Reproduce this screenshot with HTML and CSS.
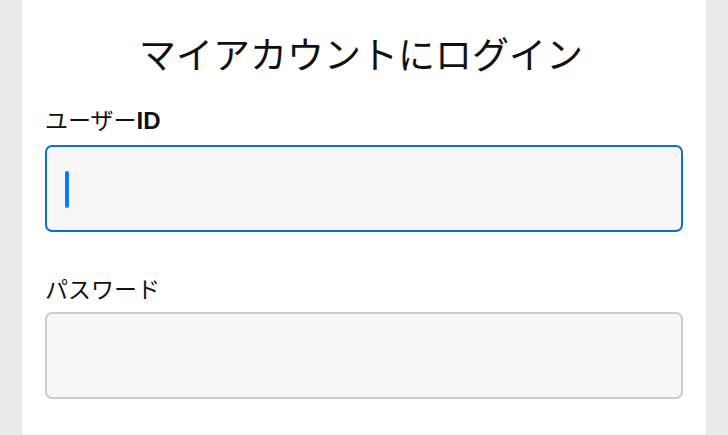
FILE: index.html
```html
<!DOCTYPE html>
<html lang="ja">
<head>
    <meta charset="UTF-8">
    <meta name="viewport" content="width=device-width, initial-scale=1.0">
    <title>ログイン</title>
    <link rel="stylesheet" href="styles.css">
</head>
<body>
    <div class="container">
        <h1>マイアカウントにログイン</h1>

        <div class="form-group">
            <label for="user-id">ユーザー<b>ID</b></label>
            <div class="field">
                <input type="text" id="user-id" class="active">
                <span class="caret"></span>
            </div>
        </div>

        <div class="form-group">
            <label for="user-password">パスワード</label>
            <div class="field">
                <input type="password" id="user-password">
            </div>
        </div>
    </div>
</body>
</html>
```

FILE: styles.css
```css
body {
    font-family: "Noto Sans CJK JP", "Noto Sans", sans-serif;
    background-color: #ebebeb;
    color: #111;
    margin: 0;
    padding: 0;
}
.container {
    margin: 0 22px;
    padding: 27px 23px 16px;
    min-height: 100vh;
    box-sizing: border-box;
    background: #fff;
}
h1 {
    margin: 0 0 22px;
    padding-right: 6px;
    font-size: 37px;
    font-weight: normal;
    line-height: 52px;
    text-align: center;
}
.form-group {
    margin-bottom: 38px;
}
.form-group:last-child {
    margin-bottom: 0;
}
.form-group label {
    display: block;
    font-size: 23px;
    line-height: 32px;
    padding-top: 2px;
    margin-bottom: 8px;
}
.form-group label b {
    font-family: "Liberation Sans", Arial, sans-serif;
    font-size: 24px;
    font-weight: bold;
}
.field {
    position: relative;
}
.field input {
    display: block;
    width: 100%;
    height: 87px;
    box-sizing: border-box;
    padding: 0 18px;
    border: 2px solid #cccccc;
    border-radius: 7px;
    background: #f7f7f7;
    font-size: 22px;
    outline: none;
    caret-color: transparent;
}
.field input.active {
    border-color: #0b6fd3;
}
.caret {
    position: absolute;
    left: 20px;
    top: 26px;
    width: 4px;
    height: 37px;
    border-radius: 2px;
    background: #0a7aff;
}
```
